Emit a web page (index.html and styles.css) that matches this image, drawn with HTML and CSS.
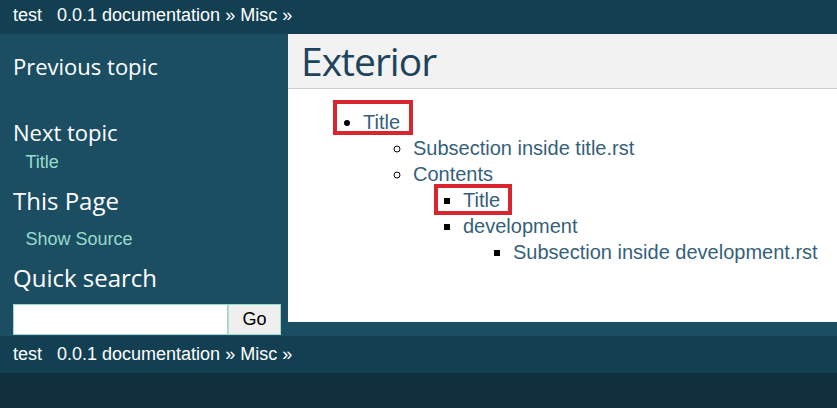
FILE: index.html
```html
<!DOCTYPE html>
<html>
<head>
<meta charset="utf-8">
<link rel="stylesheet" href="styles.css">
</head>
<body>
<div class="related top">
  <span class="proj">test</span><a href="#">0.0.1 documentation</a> &raquo; <a href="#">Misc</a> &raquo;
</div>
<div class="document">
  <div class="sidebar">
    <h4>Previous topic</h4>
    <p class="topless">&nbsp;</p>
    <h4>Next topic</h4>
    <p class="topless"><a href="#">Title</a></p>
    <h3>This Page</h3>
    <ul class="this-page"><li><a href="#">Show Source</a></li></ul>
    <h3>Quick search</h3>
    <form class="search">
      <input type="text" class="q"><button type="button" class="go">Go</button>
    </form>
  </div>
  <div class="body">
    <h1>Exterior</h1>
    <ul class="toc">
      <li><a href="#">Title</a>
        <ul>
          <li><a href="#">Subsection inside title.rst</a></li>
          <li><a href="#">Contents</a>
            <ul>
              <li><a href="#">Title</a></li>
              <li><a href="#">development</a>
                <ul>
                  <li><a href="#">Subsection inside development.rst</a></li>
                </ul>
              </li>
            </ul>
          </li>
        </ul>
      </li>
    </ul>
    <div class="mark mark-1"></div>
    <div class="mark mark-2"></div>
  </div>
</div>
<div class="related bottom">
  <span class="proj">test</span><a href="#">0.0.1 documentation</a> &raquo; <a href="#">Misc</a> &raquo;
</div>
</body>
</html>
```

FILE: styles.css
```css
html, body {
  margin: 0;
  padding: 0;
}
body {
  background: #11303d;
  font-family: "Liberation Sans", Arial, sans-serif;
  font-size: 20px;
  color: #000;
}
a {
  color: #355f7c;
  text-decoration: none;
}
.related {
  background: #133f52;
  color: #fff;
  font-size: 18px;
  padding-left: 13px;
  display: flex;
  align-items: center;
  white-space: pre;
}
.related a {
  color: #fff;
}
.related .proj {
  margin-right: 15px;
}
.related.top {
  height: 34px;
  padding-bottom: 3px;
  box-sizing: border-box;
}
.related.bottom {
  height: 37px;
}
.document {
  background: #1c4e63;
  display: flex;
  align-items: flex-start;
}
.sidebar {
  width: 288px;
  flex: none;
  box-sizing: border-box;
  padding: 12.5px 6px 1px 13px;
  font-size: 18px;
  color: #fff;
}
.sidebar h4, .sidebar h3 {
  font-family: "Open Sans", "DejaVu Sans", sans-serif;
  font-weight: normal;
  color: #fff;
  padding: 0;
}
.sidebar h4 {
  font-size: 22px;
  margin: 6px 0 0 0;
  line-height: 27px;
}
.sidebar h3 {
  font-size: 24px;
  margin: 0;
  line-height: 29px;
}
.sidebar a {
  color: #98dbcc;
}
.sidebar p.topless {
  margin: 6px 12.5px 12.5px 12.5px;
  line-height: 21px;
}
.sidebar ul.this-page {
  list-style: none;
  margin: 14px 12.5px 13px 12.5px;
  padding: 0;
  line-height: 21px;
}
.search {
  display: flex;
  margin: 12px 0 0 0;
}
.search .q {
  width: 215px;
  height: 31px;
  box-sizing: border-box;
  border: 1px solid #98dbcc;
  background: #fff;
  margin: 0;
  padding: 0 4px;
  font-size: 18px;
  font-family: "Liberation Sans", Arial, sans-serif;
}
.search .go {
  width: 53px;
  height: 31px;
  box-sizing: border-box;
  border: 1px solid #98dbcc;
  border-left: 1px solid #b9d8d8;
  background: #efefef;
  margin: 0;
  padding: 0;
  font-size: 18px;
  font-family: "Liberation Sans", Arial, sans-serif;
  color: #000;
}
.body {
  flex: 1;
  background: #fff;
  position: relative;
  padding: 0 25px 37px 25px;
}
.body h1 {
  margin: 0 -25px 0 -25px;
  padding: 4px 0 4px 13px;
  font-family: "Open Sans", "DejaVu Sans", sans-serif;
  font-weight: normal;
  font-size: 39px;
  letter-spacing: -1px;
  line-height: 46px;
  background: #f2f2f2;
  border-bottom: 1px solid #ccc;
  color: #20435c;
}
.toc {
  margin: 20px 0;
  padding-left: 50px;
  line-height: 26px;
  white-space: nowrap;
}
.toc ul {
  margin: 0;
  padding-left: 50px;
}
.mark {
  position: absolute;
  border: 4px solid #d7262e;
  box-sizing: border-box;
}
.mark-1 {
  left: 45px;
  top: 66px;
  width: 80px;
  height: 35px;
}
.mark-2 {
  left: 146px;
  top: 150px;
  width: 78px;
  height: 31px;
}
```
